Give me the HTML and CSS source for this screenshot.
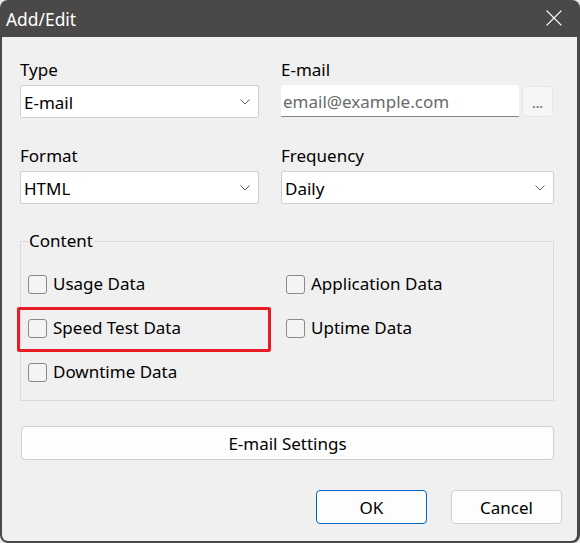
FILE: index.html
```html
<!DOCTYPE html>
<html>
<head>
<meta charset="utf-8">
<link rel="stylesheet" href="styles.css">
</head>
<body>
<div class="window">
  <div class="titlebar">
    <span class="title">Add/Edit</span>
    <svg class="close" width="16" height="16" viewBox="0 0 16 16"><path d="M0.6 0.6 L15.4 15.4 M15.4 0.6 L0.6 15.4" stroke="#ffffff" stroke-width="1.3" fill="none"/></svg>
  </div>
  <div class="client">
    <div class="fields">
      <div class="field">
        <div class="label">Type</div>
        <div class="select"><span>E-mail</span><svg class="chev" width="10" height="6" viewBox="0 0 10 6"><path d="M0.5 0.5 L5 5 L9.5 0.5" stroke="#5a5a5a" stroke-width="1" fill="none"/></svg></div>
      </div>
      <div class="field">
        <div class="label">E-mail</div>
        <div class="email-row">
          <div class="input">email@example.com</div>
          <div class="browse">...</div>
        </div>
      </div>
      <div class="field">
        <div class="label">Format</div>
        <div class="select"><span>HTML</span><svg class="chev" width="10" height="6" viewBox="0 0 10 6"><path d="M0.5 0.5 L5 5 L9.5 0.5" stroke="#5a5a5a" stroke-width="1" fill="none"/></svg></div>
      </div>
      <div class="field">
        <div class="label">Frequency</div>
        <div class="select"><span>Daily</span><svg class="chev" width="10" height="6" viewBox="0 0 10 6"><path d="M0.5 0.5 L5 5 L9.5 0.5" stroke="#5a5a5a" stroke-width="1" fill="none"/></svg></div>
      </div>
    </div>
    <fieldset class="group">
      <legend>Content</legend>
      <div class="checks">
        <div class="check"><span class="box"></span>Usage Data</div>
        <div class="check"><span class="box"></span>Application Data</div>
        <div class="check highlighted"><span class="box"></span>Speed Test Data<span class="mark"></span></div>
        <div class="check"><span class="box"></span>Uptime Data</div>
        <div class="check"><span class="box"></span>Downtime Data</div>
      </div>
    </fieldset>
    <div class="settings-btn">E-mail Settings</div>
    <div class="actions">
      <div class="btn primary">OK</div>
      <div class="btn">Cancel</div>
    </div>
  </div>
</div>
</body>
</html>
```
FILE: styles.css
```css
html, body {
  margin: 0;
  padding: 0;
  background: #eaeaea;
}
body {
  font-family: "Noto Sans", "Open Sans", sans-serif;
  font-size: 17px;
  color: #000;
}
.window {
  width: 580px;
  height: 543px;
  background: #4a4947;
  border-radius: 8px;
  display: flex;
  flex-direction: column;
  overflow: hidden;
}
.titlebar {
  height: 37px;
  flex: none;
  display: flex;
  align-items: center;
  justify-content: space-between;
  padding: 0 18px 0 6px;
  box-sizing: border-box;
}
.title {
  color: #ffffff;
  font-size: 17.4px;
}
.close {
  display: block;
  margin-top: -2px;
}
.client {
  flex: 1;
  margin: 0 3px 2px 2px;
  background: #f0f0f0;
  border-radius: 0 0 6px 6px;
  padding: 23px 15px 0 18px;
  box-sizing: border-box;
}
.fields {
  display: grid;
  grid-template-columns: 239px 273px;
  column-gap: 22px;
  row-gap: 28px;
}
.label {
  height: 20px;
  line-height: 20px;
  margin-bottom: 5px;
}
.select {
  height: 33px;
  box-sizing: border-box;
  background: #ffffff;
  border: 1px solid #cfcfcf;
  border-radius: 2px;
  display: flex;
  align-items: center;
  justify-content: space-between;
  padding: 1px 8px 0 3px;
}
.chev {
  display: block;
}
.email-row {
  display: flex;
  gap: 3px;
  height: 33px;
}
.input {
  width: 238px;
  height: 32px;
  box-sizing: border-box;
  background: #ffffff;
  border-bottom: 1px solid #858585;
  border-radius: 2px 2px 0 0;
  color: #6a6a6a;
  display: flex;
  align-items: center;
  padding: 1px 0 0 2px;
}
.browse {
  width: 31px;
  height: 31px;
  margin-top: 1px;
  box-sizing: border-box;
  background: #f6f6f6;
  border: 1px solid #e6e6e6;
  border-radius: 4px;
  color: #7f8090;
  font-size: 13px;
  font-weight: bold;
  display: flex;
  align-items: center;
  justify-content: center;
  line-height: 1;
  padding-top: 3px;
}
.group {
  margin: 27px 0 0 0;
  width: 534px;
  box-sizing: border-box;
  border: 1px solid #dadada;
  border-radius: 0;
  padding: 23px 0 18px 7px;
  min-width: 0;
}
.group legend {
  padding: 0 1px;
  line-height: 20px;
  height: 20px;
}
.checks {
  display: grid;
  grid-template-columns: 258px 1fr;
  grid-auto-rows: 20px;
  row-gap: 24px;
}
.check {
  display: flex;
  align-items: center;
  gap: 6px;
  line-height: 20px;
  position: relative;
}
.box {
  width: 19px;
  height: 19px;
  box-sizing: border-box;
  border: 1px solid #8a8a8a;
  border-radius: 3px;
  background: #f4f4f4;
  flex: none;
}
.mark {
  position: absolute;
  left: -11px;
  top: -11px;
  width: 254px;
  height: 45px;
  box-sizing: border-box;
  border: 3px solid #e81c24;
  border-radius: 2px;
}
.settings-btn {
  margin: 25px 0 0 1px;
  width: 533px;
  height: 34px;
  box-sizing: border-box;
  background: #fdfdfd;
  border: 1px solid #d0d0d0;
  border-radius: 4px;
  display: flex;
  align-items: center;
  justify-content: center;
  padding-top: 1px;
}
.actions {
  margin-top: 30px;
  display: flex;
  justify-content: flex-end;
  gap: 24px;
}
.btn {
  width: 111px;
  height: 34px;
  box-sizing: border-box;
  background: #fdfdfd;
  border: 1px solid #d0d0d0;
  border-radius: 4px;
  display: flex;
  align-items: center;
  justify-content: center;
  padding-top: 1px;
}
.btn.primary {
  border-color: #0067c0;
}
```
